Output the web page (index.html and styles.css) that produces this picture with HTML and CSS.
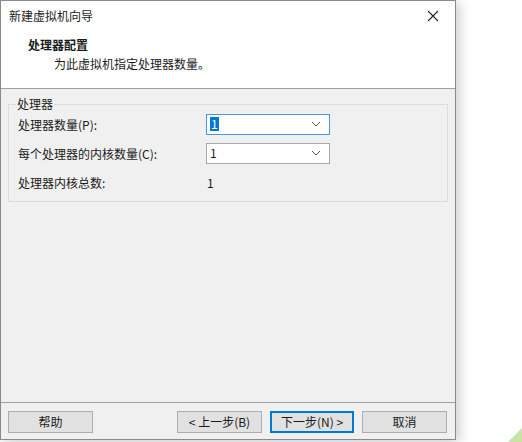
FILE: index.html
```html
<!DOCTYPE html>
<html lang="zh-CN">
<head>
<meta charset="utf-8">
<title>新建虚拟机向导</title>
<link rel="stylesheet" href="styles.css">
</head>
<body>
<svg class="desk-leaf" width="16" height="16" viewBox="0 0 16 16" aria-hidden="true">
  <polygon points="2,16 16,16 16,2" fill="#c9e3a6"/>
</svg>
<div class="dialog">
  <div class="header">
    <div class="titlebar">
      <span class="title">新建虚拟机向导</span>
      <svg class="close" width="12" height="12" viewBox="0 0 12 12" aria-hidden="true">
        <path d="M1 1 L11 11 M11 1 L1 11" stroke="#222" stroke-width="1.1" fill="none"/>
      </svg>
    </div>
    <div class="heading">处理器配置</div>
    <div class="subtitle">为此虚拟机指定处理器数量。</div>
  </div>
  <div class="body">
    <fieldset class="group">
      <legend>处理器</legend>
      <div class="row">
        <span class="label">处理器数量(P):</span>
        <div class="combo focused"><span class="sel">1</span><svg class="arrow" width="10" height="6" viewBox="0 0 10 6"><path d="M1 1 L5 5 L9 1" stroke="#555" fill="none"/></svg></div>
      </div>
      <div class="row">
        <span class="label">每个处理器的内核数量(C):</span>
        <div class="combo"><span>1</span><svg class="arrow" width="10" height="6" viewBox="0 0 10 6"><path d="M1 1 L5 5 L9 1" stroke="#555" fill="none"/></svg></div>
      </div>
      <div class="row total">
        <span class="label">处理器内核总数:</span>
        <span class="value">1</span>
      </div>
    </fieldset>
  </div>
  <div class="footer">
    <button class="btn">帮助</button>
    <div class="spacer"></div>
    <button class="btn">&lt; 上一步(B)</button>
    <button class="btn primary">下一步(N) &gt;</button>
    <button class="btn cancel">取消</button>
  </div>
</div>
</body>
</html>
```
FILE: styles.css
```css
html, body {
  margin: 0;
  padding: 0;
  background: #ffffff;
}

body {
  width: 522px;
  height: 442px;
  position: relative;
  overflow: hidden;
  font-family: "Noto Sans CJK SC", "Noto Sans", sans-serif;
  font-size: 12px;
  color: #1a1a1a;
}

.desk-leaf {
  position: absolute;
  right: 0;
  bottom: 0;
}

.dialog {
  position: relative;
  width: 456px;
  height: 440px;
  box-sizing: border-box;
  border: 1px solid #8a8a8a;
  background: #f0f0f0;
  display: flex;
  flex-direction: column;
  box-shadow: 3px 2px 12px rgba(0, 0, 0, 0.22);
}

.header {
  background: #ffffff;
  height: 87px;
  border-bottom: 1px solid #a0a0a0;
  flex: none;
}

.titlebar {
  height: 30px;
  display: flex;
  align-items: center;
  padding: 0 12px 0 8px;
}

.title {
  flex: 1;
  line-height: 16px;
}

.close {
  display: block;
  margin-right: 4px;
}

.heading {
  font-weight: bold;
  margin: 6px 0 0 27px;
  line-height: 16px;
}

.subtitle {
  margin: 3px 0 0 53px;
  line-height: 16px;
}

.body {
  flex: 1;
  padding: 8px 7px 0 7px;
}

.group {
  margin: 0;
  padding: 3px 0 9px 9px;
  width: 440px;
  box-sizing: border-box;
  border: 1px solid #dcdcdc;
  border-radius: 0;
}

.group legend {
  padding: 0 1px;
  margin-left: -2px;
  line-height: 14px;
}

.row {
  display: flex;
  align-items: center;
  height: 20px;
  margin-bottom: 9px;
}

.row.total {
  margin-bottom: 0;
  margin-top: 0;
  height: 20px;
}

.label {
  width: 188px;
  flex: none;
}

.combo {
  width: 124px;
  height: 21px;
  box-sizing: border-box;
  border: 1px solid #a9a9a9;
  background: #ffffff;
  display: flex;
  align-items: center;
  padding: 0 8px 0 3px;
}

.combo.focused {
  border-color: #4a95dd;
}

.combo span {
  flex: 1;
  line-height: 14px;
}

.combo .sel {
  flex: none;
  background: #0078d7;
  color: #ffffff;
  padding: 0 1px;
  margin-right: auto;
}

.arrow {
  display: block;
}

.value {
  padding-left: 1px;
}

.footer {
  flex: none;
  height: 37px;
  border-top: 1px solid #a0a0a0;
  display: flex;
  align-items: flex-start;
  padding: 8px 0 0 7px;
  box-sizing: border-box;
}

.spacer {
  flex: 1;
}

.btn {
  width: 85px;
  height: 22px;
  box-sizing: border-box;
  border: 1px solid #adadad;
  background: #e1e1e1;
  font-family: inherit;
  font-size: 12px;
  color: #1a1a1a;
  padding: 0;
  margin: 0;
  line-height: 18px;
}

.btn.primary {
  margin-left: 8px;
  border: 1px solid #0078d7;
  box-shadow: inset 0 0 0 1px #0078d7;
  width: 84px;
}

.btn.cancel {
  margin-left: 8px;
  margin-right: 8px;
}
```
